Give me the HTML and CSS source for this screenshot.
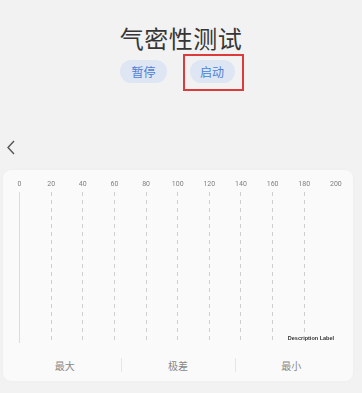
FILE: index.html
```html
<!DOCTYPE html>
<html lang="zh">
<head>
<meta charset="utf-8">
<link rel="stylesheet" href="styles.css">
</head>
<body>
<div class="page">
  <header class="head">
    <h1 class="title">气密性测试</h1>
    <div class="actions">
      <button class="pill">暂停</button>
      <button class="pill pill-marked">启动<span class="mark"></span></button>
    </div>
  </header>
  <div class="back">
    <svg width="10" height="15" viewBox="0 0 10 15"><path d="M8 1 L2 7.5 L8 14" fill="none" stroke="#555" stroke-width="1.4"/></svg>
  </div>
  <section class="card">
    <div class="chart">
      <div class="col"><span class="tick">0</span><i class="line solid"></i></div>
      <div class="col"><span class="tick">20</span><i class="line"></i></div>
      <div class="col"><span class="tick">40</span><i class="line"></i></div>
      <div class="col"><span class="tick">60</span><i class="line"></i></div>
      <div class="col"><span class="tick">80</span><i class="line"></i></div>
      <div class="col"><span class="tick">100</span><i class="line"></i></div>
      <div class="col"><span class="tick">120</span><i class="line"></i></div>
      <div class="col"><span class="tick">140</span><i class="line"></i></div>
      <div class="col"><span class="tick">160</span><i class="line"></i></div>
      <div class="col"><span class="tick">180</span><i class="line"></i></div>
      <div class="col"><span class="tick">200</span><i class="line none"></i></div>
      <span class="desc">Description Label</span>
    </div>
    <div class="stats">
      <div class="stat">最大</div>
      <div class="stat">极差</div>
      <div class="stat">最小</div>
    </div>
  </section>
</div>
</body>
</html>
```
FILE: styles.css
```css
* { box-sizing: border-box; }
html, body { margin: 0; padding: 0; }
body {
  background: #f2f2f2;
  font-family: "Noto Sans CJK SC", "Noto Sans", sans-serif;
  width: 362px;
  height: 393px;
  overflow: hidden;
  -webkit-font-smoothing: antialiased;
}
.page { display: flex; flex-direction: column; }
.head { display: flex; flex-direction: column; align-items: center; }
.title {
  margin: 23px 0 0;
  font-size: 24px;
  line-height: 30px;
  font-weight: 400;
  color: #363636;
  letter-spacing: 0.5px;
}
.actions {
  display: flex;
  gap: 23px;
  margin-top: 7px;
  padding-right: 7px;
}
.pill {
  position: relative;
  height: 23px;
  padding: 0 11px;
  border: 0;
  border-radius: 12px;
  background: #dee6f4;
  color: #4b7fd6;
  font-family: "Noto Sans CJK SC", sans-serif;
  font-size: 12px;
  line-height: 23px;
}
.pill-marked { padding: 0 10.5px; }
.mark {
  position: absolute;
  left: -7px;
  top: -6px;
  width: 61px;
  height: 37px;
  border: 2px solid #dc3b3b;
}
.back { margin: 57px 0 0 6px; height: 15px; display: flex; }
.card {
  margin: 15px 9px 0 3px;
  height: 211px;
  background: #fafafa;
  border-radius: 8px;
  box-shadow: 0 0 3px rgba(0,0,0,0.03);
  display: flex;
  flex-direction: column;
}
.chart {
  position: relative;
  display: flex;
  justify-content: space-between;
  padding: 10px 7px 0 6.5px;
  will-change: transform;
}
.col {
  width: 20px;
  display: flex;
  flex-direction: column;
  align-items: center;
}
.tick {
  font-family: "Roboto", "Liberation Sans", sans-serif;
  font-size: 7px;
  line-height: 9px;
  color: #808080;
}
.line {
  display: block;
  margin-top: 3px;
  width: 1px;
  height: 151px;
  background: repeating-linear-gradient(to bottom, #cfcfcf 0 4px, transparent 4px 8px);
}
.line.solid { width: 1.5px; background: #dcdcdc; }
.line.none { background: none; }
.desc {
  position: absolute;
  right: 17px;
  bottom: 1px;
  padding: 0 2px;
  background: #fafafa;
  font-family: "Liberation Sans", sans-serif;
  font-size: 5.5px;
  font-weight: 700;
  color: #333;
  line-height: 8px;
}
.stats {
  display: flex;
  margin-top: 7px;
  padding: 0 5px;
  height: 30px;
}
.stat {
  flex: 1;
  display: flex;
  align-items: center;
  justify-content: center;
  font-size: 10px;
  color: #888;
  position: relative;
}
.stat + .stat::before {
  content: "";
  position: absolute;
  left: 0;
  top: 8px;
  height: 14px;
  width: 1px;
  background: #e6e6e6;
}
```
